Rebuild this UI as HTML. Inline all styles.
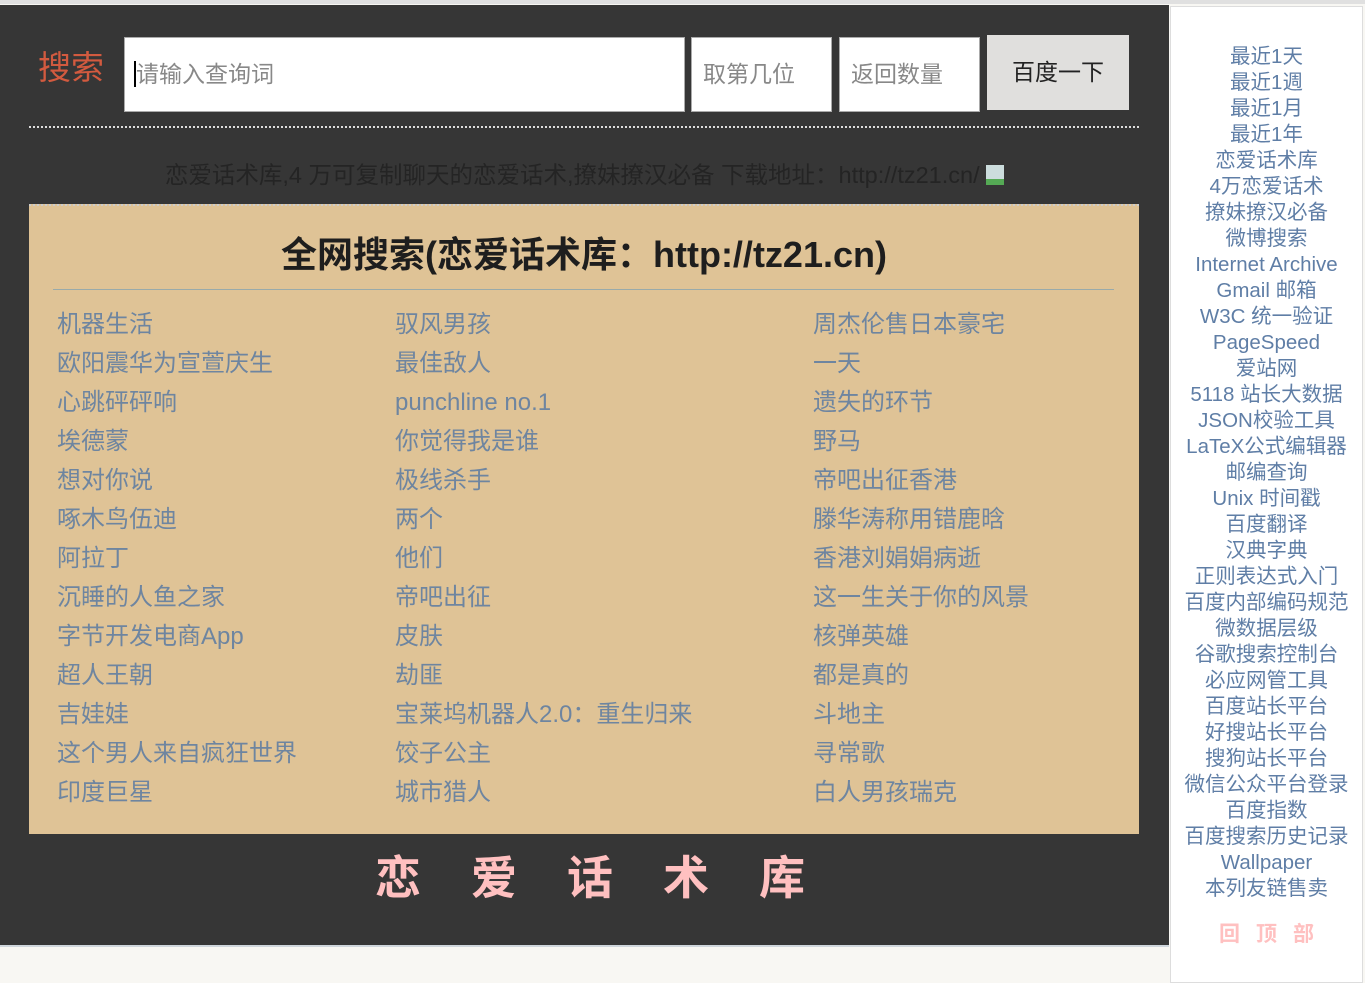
<!DOCTYPE html>
<html><head><meta charset="utf-8"><style>
body{margin:0;width:1365px;height:981px;background:#f8f7f3;font-family:"Liberation Sans","Noto Sans CJK SC",sans-serif;position:relative;overflow:hidden}
.top{position:absolute;left:0;top:0;width:1365px;height:4px;background:#e0e0e0}
.dark{position:absolute;left:0;top:5px;width:1169px;height:940px;background:#363636;border-bottom:2px solid #cfd6dc}
.side{position:absolute;left:1170px;top:6px;width:191px;height:975px;background:#fff;border:1px solid #ddd;text-align:center}
.side a{display:block;color:#5f7ea6;font-size:20.5px;line-height:26px;text-decoration:none;white-space:nowrap}
.abs{position:absolute}
.inp{position:absolute;background:#fff;border:1px solid #aaa;box-sizing:border-box;color:#888;font-size:23px;padding-left:11px;line-height:72px}
.list{position:absolute;color:#6e85a0;font-size:24px;line-height:39px;white-space:nowrap}
</style></head><body>
<div class="top"></div>
<div class="dark"></div>
<div class="abs" style="left:38px;top:48px;color:#d25a3f;font-size:33px;line-height:40px">搜索</div>
<div class="inp" style="left:124px;top:37px;width:561px;height:75px"><span style="border-left:2px solid #000;margin-left:-2px"></span>请输入查询词</div>
<div class="inp" style="left:691px;top:37px;width:141px;height:75px">取第几位</div>
<div class="inp" style="left:839px;top:37px;width:141px;height:75px">返回数量</div>
<div class="abs" style="left:987px;top:35px;width:142px;height:75px;background:#e0dfdd;color:#222;font-size:23px;line-height:75px;text-align:center">百度一下</div>
<div class="abs" style="left:29px;top:126px;width:1110px;border-top:2px dotted #ddd"></div>
<div class="abs" style="left:0;width:1169px;top:160px;text-align:center;color:#242424;font-size:23.5px;line-height:30px;white-space:nowrap">恋爱话术库,4 万可复制聊天的恋爱话术,撩妹撩汉必备 下载地址：http://tz21.cn/ <span style="display:inline-block;width:18px;height:20px;background:#cdd;border-bottom:6px solid #5a5;box-sizing:border-box;vertical-align:-2px"></span></div>
<div class="abs" style="left:29px;top:204px;width:1110px;height:630px;background:#dfc396;border-top:2px dotted #ccc;box-sizing:border-box"></div>
<div class="abs" style="left:29px;width:1110px;top:233px;text-align:center;font-weight:bold;font-size:36px;line-height:44px;color:#1e1e1e">全网搜索(恋爱话术库：http://tz21.cn)</div>
<div class="abs" style="left:53px;top:289px;width:1061px;border-top:1px solid #9aa;"></div>
<div class="list" style="left:57px;top:305px">机器生活<br>欧阳震华为宣萱庆生<br>心跳砰砰响<br>埃德蒙<br>想对你说<br>啄木鸟伍迪<br>阿拉丁<br>沉睡的人鱼之家<br>字节开发电商App<br>超人王朝<br>吉娃娃<br>这个男人来自疯狂世界<br>印度巨星</div>
<div class="list" style="left:395px;top:305px">驭风男孩<br>最佳敌人<br>punchline no.1<br>你觉得我是谁<br>极线杀手<br>两个<br>他们<br>帝吧出征<br>皮肤<br>劫匪<br>宝莱坞机器人2.0：重生归来<br>饺子公主<br>城市猎人</div>
<div class="list" style="left:813px;top:305px">周杰伦售日本豪宅<br>一天<br>遗失的环节<br>野马<br>帝吧出征香港<br>滕华涛称用错鹿晗<br>香港刘娟娟病逝<br>这一生关于你的风景<br>核弹英雄<br>都是真的<br>斗地主<br>寻常歌<br>白人男孩瑞克</div>
<div class="abs" style="left:375px;top:850px;color:#ffc0c0;font-weight:bold;font-size:46px;line-height:56px;letter-spacing:50px;white-space:nowrap">恋爱话术库</div>
<div class="side"><div style="height:37px"></div>
<a>最近1天</a><a>最近1週</a><a>最近1月</a><a>最近1年</a><a>恋爱话术库</a><a>4万恋爱话术</a><a>撩妹撩汉必备</a><a>微博搜索</a><a>Internet Archive</a><a>Gmail 邮箱</a><a>W3C 统一验证</a><a>PageSpeed</a><a>爱站网</a><a>5118 站长大数据</a><a>JSON校验工具</a><a>LaTeX公式编辑器</a><a>邮编查询</a><a>Unix 时间戳</a><a>百度翻译</a><a>汉典字典</a><a>正则表达式入门</a><a>百度内部编码规范</a><a>微数据层级</a><a>谷歌搜索控制台</a><a>必应网管工具</a><a>百度站长平台</a><a>好搜站长平台</a><a>搜狗站长平台</a><a>微信公众平台登录</a><a>百度指数</a><a>百度搜索历史记录</a><a>Wallpaper</a><a>本列友链售卖</a>
<div style="margin-top:16px;color:#ffc0c0;font-weight:bold;font-size:21px;letter-spacing:16px;padding-left:16px">回顶部</div>
</div>
</body></html>
